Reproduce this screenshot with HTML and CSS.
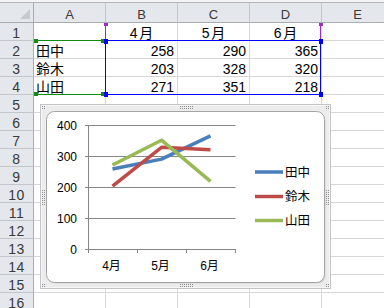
FILE: index.html
```html
<!DOCTYPE html>
<html lang="ja">
<head>
<meta charset="utf-8">
<title>Sheet</title>
<link rel="stylesheet" href="styles.css">
</head>
<body>
<div class="page">
  <div class="topbar"></div>
  <div class="sheet">
    <div class="corner"><span class="tri"></span></div>
    <div class="ch">A</div><div class="ch">B</div><div class="ch">C</div><div class="ch">D</div><div class="ch">E</div>

    <div class="rh">1</div><div class="c"></div><div class="c month">4月</div><div class="c month">5月</div><div class="c month">6月</div><div class="c"></div>
    <div class="rh">2</div><div class="c name">田中</div><div class="c num">258</div><div class="c num">290</div><div class="c num">365</div><div class="c"></div>
    <div class="rh">3</div><div class="c name">鈴木</div><div class="c num">203</div><div class="c num">328</div><div class="c num">320</div><div class="c"></div>
    <div class="rh">4</div><div class="c name">山田</div><div class="c num">271</div><div class="c num">351</div><div class="c num">218</div><div class="c"></div>
    <div class="rh">5</div><div class="c"></div><div class="c"></div><div class="c"></div><div class="c"></div><div class="c"></div>
    <div class="rh">6</div><div class="c"></div><div class="c"></div><div class="c"></div><div class="c"></div><div class="c"></div>
    <div class="rh">7</div><div class="c"></div><div class="c"></div><div class="c"></div><div class="c"></div><div class="c"></div>
    <div class="rh">8</div><div class="c"></div><div class="c"></div><div class="c"></div><div class="c"></div><div class="c"></div>
    <div class="rh">9</div><div class="c"></div><div class="c"></div><div class="c"></div><div class="c"></div><div class="c"></div>
    <div class="rh">10</div><div class="c"></div><div class="c"></div><div class="c"></div><div class="c"></div><div class="c"></div>
    <div class="rh">11</div><div class="c"></div><div class="c"></div><div class="c"></div><div class="c"></div><div class="c"></div>
    <div class="rh">12</div><div class="c"></div><div class="c"></div><div class="c"></div><div class="c"></div><div class="c"></div>
    <div class="rh">13</div><div class="c"></div><div class="c"></div><div class="c"></div><div class="c"></div><div class="c"></div>
    <div class="rh">14</div><div class="c"></div><div class="c"></div><div class="c"></div><div class="c"></div><div class="c"></div>
    <div class="rh">15</div><div class="c"></div><div class="c"></div><div class="c"></div><div class="c"></div><div class="c"></div>
    <div class="rh">16</div><div class="c"></div><div class="c"></div><div class="c"></div><div class="c"></div><div class="c"></div>
  </div>

  <!-- data-source range highlights -->
  <div class="sel-purple"></div>
  <div class="sel-green"></div>
  <div class="sel-blue"></div>
  <span class="hd hd-p" style="left:104px;top:23px"></span>
  <span class="hd hd-p" style="left:319px;top:23px"></span>
  <span class="hd hd-g" style="left:34px;top:39px"></span>
  <span class="hd hd-g" style="left:101px;top:39px"></span>
  <span class="hd hd-g" style="left:34px;top:92px"></span>
  <span class="hd hd-g" style="left:101px;top:92px"></span>
  <span class="hd hd-b" style="left:104px;top:39px"></span>
  <span class="hd hd-b" style="left:319px;top:39px"></span>
  <span class="hd hd-b" style="left:104px;top:92px"></span>
  <span class="hd hd-b" style="left:319px;top:92px"></span>

  <svg class="chart" width="291" height="185" viewBox="40 104 291 185" xmlns="http://www.w3.org/2000/svg">
    <defs>
      <pattern id="dots" width="2" height="2" patternUnits="userSpaceOnUse">
        <rect x="0" y="0" width="1" height="1" fill="#8e8e8e"/>
      </pattern>
    </defs>
    <!-- selection frame -->
    <rect x="40.5" y="104.5" width="290" height="184" fill="#ececec" stroke="#c4c4c4"/>
    <rect x="41.5" y="105.5" width="288" height="182" fill="none" stroke="#f6f6f6"/>
    <rect x="42" y="106" width="4" height="4" fill="url(#dots)"/>
    <rect x="326" y="106" width="4" height="4" fill="url(#dots)"/>
    <rect x="42" y="283" width="4" height="4" fill="url(#dots)"/>
    <rect x="326" y="283" width="4" height="4" fill="url(#dots)"/>
    <rect x="180" y="106" width="14" height="4" fill="url(#dots)"/>
    <rect x="180" y="284" width="14" height="4" fill="url(#dots)"/>
    <rect x="42" y="190" width="4" height="16" fill="url(#dots)"/>
    <rect x="326" y="190" width="4" height="16" fill="url(#dots)"/>
    <!-- chart area -->
    <rect x="47.5" y="112.5" width="278" height="171" rx="8" fill="#d2d2d2" stroke="none"/>
    <rect x="46.5" y="111.5" width="278" height="171" rx="8" fill="#fff" stroke="#a4a4a4"/>

    <!-- gridlines and axes -->
    <g stroke="#868686" stroke-width="1" fill="none">
      <path d="M85 125.5H235.5M85 156.5H235.5M85 187.5H235.5M85 218.5H235.5M85 249.5H235.5"/>
      <path d="M88.5 125V253M137.5 249V253M186.5 249V253M235.5 249V253"/>
    </g>

    <!-- series -->
    <g fill="none" stroke-width="3.5" stroke-linejoin="round">
      <polyline stroke="#4a7ebb" points="112.5,169 161.5,159.1 210.5,135.9"/>
      <polyline stroke="#be4b48" points="112.5,186.1 161.5,147.3 210.5,149.8"/>
      <polyline stroke="#98b954" points="112.5,165 161.5,140.2 210.5,181.4"/>
    </g>

    <!-- value axis labels -->
    <g class="axis" text-anchor="end">
      <text x="77" y="129.5">400</text>
      <text x="77" y="160.5">300</text>
      <text x="77" y="191.5">200</text>
      <text x="77" y="222.5">100</text>
      <text x="77" y="253.5">0</text>
    </g>
    <!-- category labels -->
    <g class="axis" text-anchor="middle">
      <text x="111.5" y="270">4月</text>
      <text x="160.5" y="270">5月</text>
      <text x="209.5" y="270">6月</text>
    </g>

    <!-- legend -->
    <g stroke-width="3.5">
      <line x1="255" y1="172" x2="283" y2="172" stroke="#4a7ebb"/>
      <line x1="255" y1="196.5" x2="283" y2="196.5" stroke="#be4b48"/>
      <line x1="255" y1="220.5" x2="283" y2="220.5" stroke="#98b954"/>
    </g>
    <g class="legend">
      <text x="285" y="176.8">田中</text>
      <text x="285" y="201.2">鈴木</text>
      <text x="285" y="225.2">山田</text>
    </g>
  </svg>
</div>
</body>
</html>
```

FILE: styles.css
```css
* { box-sizing: border-box; }
html, body { margin: 0; padding: 0; }
body {
  width: 384px;
  height: 308px;
  overflow: hidden;
  background: #ffffff;
  font-family: "Liberation Sans", "Noto Sans CJK JP", sans-serif;
  color: #000;
}
.page {
  position: relative;
  width: 384px;
  height: 308px;
  overflow: hidden;
}
.topbar {
  height: 3px;
  background: #f4f4f4;
  border-bottom: 1px solid #b4b4b4;
}
.sheet {
  display: grid;
  grid-template-columns: 34px repeat(5, 72px);
  grid-template-rows: 20px;
  grid-auto-rows: 18px;
  width: 394px;
}
.sheet > div {
  border-right: 1px solid #d6d6d6;
  border-bottom: 1px solid #d6d6d6;
}
.sheet > .ch,
.sheet > .rh,
.sheet > .corner {
  background: #e4e7eb;
  color: #3a3a3a;
  border-right-color: #c2c6cb;
  border-bottom-color: #c2c6cb;
  display: flex;
  align-items: center;
  justify-content: center;
}
.sheet > .ch {
  font-size: 13px;
  padding-top: 3px;
  border-bottom-color: #a9adb3;
}
.sheet > .rh {
  font-size: 14px;
  padding-top: 2px;
  letter-spacing: 0.5px;
  border-right-color: #a9adb3;
}
.sheet > .corner {
  justify-content: flex-end;
  align-items: flex-end;
  padding: 0 3px 3px 0;
  border-right-color: #a9adb3;
  border-bottom-color: #a9adb3;
}
.tri {
  display: block;
  width: 10px;
  height: 10px;
  background: #c6cacf;
  clip-path: polygon(100% 0, 100% 100%, 0 100%);
}
.c {
  font-size: 14px;
  line-height: 16px;
  padding-top: 2px;
  white-space: nowrap;
}
.num { text-align: right; padding-right: 3px; }
.name { padding-left: 2px; }
.month { text-align: center; letter-spacing: 1.5px; padding-left: 1.5px; }

/* range highlight overlays */
.sel-blue {
  position: absolute;
  left: 105px;
  top: 40px;
  width: 216px;
  height: 55px;
  border: 1px solid #0000ff;
}
.sel-purple {
  position: absolute;
  left: 105px;
  top: 24px;
  width: 216px;
  height: 17px;
  border-left: 1px solid #9b2fc6;
  border-right: 1px solid #9b2fc6;
}
.sel-green {
  position: absolute;
  left: 34px;
  top: 40px;
  width: 72px;
  height: 55px;
  border-top: 1px solid #118a11;
  border-bottom: 1px solid #118a11;
}
.hd {
  position: absolute;
  width: 4px;
  height: 4px;
}
.hd-b { background: #0000ff; width: 4px; height: 5px; }
.hd-g { background: #118a11; }
.hd-p { background: #9b2fc6; height: 3px; }

/* chart */
.chart {
  position: absolute;
  left: 40px;
  top: 104px;
  display: block;
}
.axis {
  font-family: "Liberation Sans", "Noto Sans CJK JP", sans-serif;
  font-size: 12px;
  fill: #000;
}
.legend {
  font-family: "Noto Sans CJK JP", sans-serif;
  font-size: 12.5px;
  fill: #000;
}
```
